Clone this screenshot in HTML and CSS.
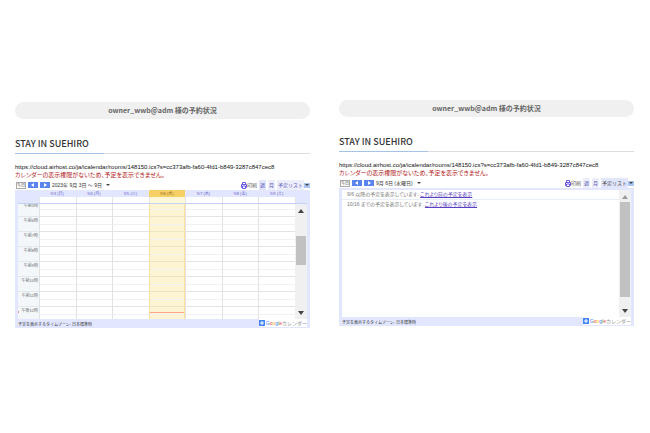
FILE: index.html
```html
<!DOCTYPE html>
<html lang="ja">
<head>
  <meta charset="UTF-8">
  <meta name="viewport" content="width=device-width, initial-scale=1.0">
  <title>予約状況</title>
  <link rel="stylesheet" href="styles.css">
</head>
<body>
  <main class="page">

    <section class="panel panel-week">
      <div class="owner">owner_wwb@adm 様の予約状況</div>
      <h1>STAY IN SUEHIRO</h1>
      <p class="url">https://cloud.airhost.co/ja/icalendar/rooms/148150.ics?s=cc373afb-fa60-4fd1-b849-3287c847cec8</p>
      <p class="error">カレンダーの表示権限がないため、予定を表示できません。</p>

      <div class="toolbar">
        <button class="today">今日</button>
        <button class="nav" aria-label="前へ"><svg viewBox="0 0 4 4"><path d="M3 0v4L0 2z"/></svg></button>
        <button class="nav" aria-label="次へ"><svg viewBox="0 0 4 4"><path d="M1 0v4l3-2z"/></svg></button>
        <button class="range">2023年 9月 3日 ～ 9日 <svg viewBox="0 0 4 2"><path d="M0 0h4L2 2z"/></svg></button>
        <a href="#" class="print"><svg viewBox="0 0 12 14"><path d="M3 5V1h6v4M3 11H1V5h10v6H9M3 8h6v5H3z"/></svg>印刷</a>
        <button class="tab active">週</button>
        <button class="tab">月</button>
        <button class="tab">予定リスト</button>
        <button class="more" aria-label="メニュー"><svg viewBox="0 0 4 2"><path d="M0 0h4L2 2z"/></svg></button>
      </div>

      <div class="calendar">
        <table class="days">
          <thead>
            <tr><th class="time"></th><th>9/3 (日)</th><th>9/4 (月)</th><th>9/5 (火)</th><th class="now">9/6 (水)</th><th>9/7 (木)</th><th>9/8 (金)</th><th>9/9 (土)</th><th class="gutter"></th></tr>
          </thead>
          <tbody>
            <tr><td class="time"></td><td></td><td></td><td></td><td class="now"></td><td></td><td></td><td></td><td class="gutter"></td></tr>
          </tbody>
        </table>
        <div class="scroller">
          <div class="hours">
            <table>
              <tbody id="hours"></tbody>
            </table>
          </div>
          <div class="scrollbar">
            <svg class="arrow" viewBox="0 0 6 4"><path d="M0 4h6L3 0z"/></svg>
            <div class="thumb"></div>
            <svg class="arrow" viewBox="0 0 6 4"><path d="M0 0h6L3 4z"/></svg>
          </div>
        </div>
        <div class="footer">
          <span>予定を表示するタイムゾーン: 日本標準時</span>
          <a href="#" class="brand"><svg viewBox="0 0 6 6"><path d="M3 1v4M1 3h4"/></svg><span class="logo"><b class="b">G</b><b class="r">o</b><b class="y">o</b><b class="b">g</b><b class="g">l</b><b class="r">e</b>カレンダー</span></a>
        </div>
      </div>
    </section>

    <section class="panel panel-list">
      <div class="owner">owner_wwb@adm 様の予約状況</div>
      <h1>STAY IN SUEHIRO</h1>
      <p class="url">https://cloud.airhost.co/ja/icalendar/rooms/148150.ics?s=cc373afb-fa60-4fd1-b849-3287c847cec8</p>
      <p class="error">カレンダーの表示権限がないため、予定を表示できません。</p>

      <div class="toolbar">
        <button class="today">今日</button>
        <button class="nav" aria-label="前へ"><svg viewBox="0 0 4 4"><path d="M3 0v4L0 2z"/></svg></button>
        <button class="nav" aria-label="次へ"><svg viewBox="0 0 4 4"><path d="M1 0v4l3-2z"/></svg></button>
        <button class="range">9月 6日 (水曜日) <svg viewBox="0 0 4 2"><path d="M0 0h4L2 2z"/></svg></button>
        <a href="#" class="print"><svg viewBox="0 0 12 14"><path d="M3 5V1h6v4M3 11H1V5h10v6H9M3 8h6v5H3z"/></svg>印刷</a>
        <button class="tab">週</button>
        <button class="tab">月</button>
        <button class="tab active">予定リスト</button>
        <button class="more" aria-label="メニュー"><svg viewBox="0 0 4 2"><path d="M0 0h4L2 2z"/></svg></button>
      </div>

      <div class="calendar">
        <div class="scroller agenda">
          <div class="events">
            <p>9/6 以降の予定を表示しています. <a href="#">これより前の予定を表示</a></p>
            <p>10/16 までの予定を表示しています. <a href="#">これより後の予定を表示</a></p>
          </div>
          <div class="scrollbar">
            <svg class="arrow off" viewBox="0 0 6 4"><path d="M0 4h6L3 0z"/></svg>
            <div class="thumb"></div>
            <svg class="arrow" viewBox="0 0 6 4"><path d="M0 0h6L3 4z"/></svg>
          </div>
        </div>
        <div class="footer">
          <span>予定を表示するタイムゾーン: 日本標準時</span>
          <a href="#" class="brand"><svg viewBox="0 0 6 6"><path d="M3 1v4M1 3h4"/></svg><span class="logo"><b class="b">G</b><b class="r">o</b><b class="y">o</b><b class="b">g</b><b class="g">l</b><b class="r">e</b>カレンダー</span></a>
        </div>
      </div>
    </section>

  </main>

  <script src="script.js"></script>
</body>
</html>
```
FILE: styles.css
```css
* {
  box-sizing: border-box;
}

body {
  margin: 0;
  background: #fff;
  color: #333;
  font-family: "Liberation Sans", "Noto Sans CJK JP", sans-serif;
  font-size: 5px;
  line-height: 8px;
}

button {
  font: inherit;
  color: inherit;
  border: none;
  padding: 0;
  background: none;
  cursor: pointer;
  white-space: nowrap;
}

svg {
  display: block;
}

.page {
  display: grid;
  grid-template-columns: 1fr 1fr;
  gap: 29px;
  align-items: start;
  padding: 100px 16px 20px 15px;
}

.panel {
  min-width: 0;
}

.panel-week {
  padding-top: 2px;
}

.owner {
  height: 17px;
  border-radius: 9px;
  background: #f0f0f0;
  color: #666;
  text-align: center;
  font-family: "Noto Sans CJK JP", sans-serif;
  font-size: 7px;
  font-weight: 700;
  line-height: 17px;
}

h1 {
  position: relative;
  margin: 17px 0 9px;
  border-bottom: 1px solid #ddd;
  font-family: "Noto Sans CJK JP", sans-serif;
  font-size: 9px;
  font-weight: 500;
  line-height: 15px;
  padding-bottom: 2px;
}

h1::after {
  content: "";
  position: absolute;
  left: 0;
  bottom: -1px;
  width: 30%;
  height: 1px;
  background: #a4c3e6;
}

.url,
.error {
  margin: 0;
  font-size: 6px;
  white-space: nowrap;
}

.url {
  color: #111;
}

.error {
  color: #b32121;
  font-feature-settings: "palt";
}

.toolbar {
  display: flex;
  align-items: center;
  gap: 2px;
  height: 10px;
  margin-top: 1px;
  padding-left: 1px;
}

.today {
  display: flex;
  align-items: center;
  justify-content: center;
  width: 10px;
  height: 7px;
  border: 1px solid #aaa;
  font-size: 4px;
  line-height: 5px;
}

.nav {
  display: flex;
  align-items: center;
  justify-content: center;
  width: 10px;
  height: 6px;
  background: #5b84ee;
}

.nav svg {
  width: 4px;
  height: 4px;
  fill: #fff;
}

.range {
  display: flex;
  align-items: center;
  gap: 4px;
  font-feature-settings: "palt";
}

.range svg,
.more svg {
  width: 4px;
  height: 2px;
  fill: #444;
}

.print {
  display: flex;
  align-items: center;
  margin-left: auto;
  color: #666;
  text-decoration: none;
}

.print svg {
  width: 6px;
  height: 7px;
  fill: none;
  stroke: #6a5ae0;
  stroke-width: 2;
}

.tab {
  height: 10px;
  padding: 0 1px;
  background: #eceffb;
  color: #5a54b8;
}

.tab.active {
  background: #e1e6fc;
}

.panel-list .tab.active {
  color: #444;
}

.more {
  display: flex;
  align-items: center;
  justify-content: center;
  width: 6px;
  height: 5px;
  margin-left: -2px;
  background: #a9c5f3;
}

.calendar {
  background: #e2e7ff;
  padding: 0 3px;
}

.calendar table {
  width: 100%;
  table-layout: fixed;
  border-spacing: 0;
}

.calendar th,
.calendar td {
  padding: 0;
}

.calendar .time {
  width: 21px;
}

.calendar .gutter {
  width: 12px;
  background: none;
}

.days {
  font-size: 4px;
}

.days th {
  height: 7px;
  color: #6a62c4;
  font-weight: normal;
  line-height: 7px;
}

.days td {
  height: 6px;
  background: #fff;
  border-left: 1px solid #e3e3e8;
}

.days td.time {
  background: none;
  border: none;
}

.days th.now {
  background: #f6d065;
  color: #8a6420;
}

.days td.now {
  background: #fff7d7;
}

.scroller {
  display: flex;
  height: 116px;
  border-top: 1px solid #c3d2f7;
  background: #fff;
}

.hours {
  flex: 1;
  overflow: hidden;
}

.hours table {
  margin-top: -3px;
}

.hours td {
  height: 15px;
  border-top: 1px solid #e4e4e4;
  border-left: 1px solid #e2e2e2;
  background: linear-gradient(transparent 7px, #f1f1f1 7px, #f1f1f1 8px, transparent 8px);
}

.hours th {
  padding-right: 1px;
  border-top: 1px solid #e3e8ee;
  background: #f3f7fa;
  color: #666;
  font-size: 4px;
  font-weight: normal;
  line-height: 7px;
  text-align: right;
  vertical-align: top;
}

.hours td.now {
  position: relative;
  border-left: 1px solid #f8e29c;
  border-right: 1px solid #f8e29c;
  background-color: #fdf4d3;
  border-top-color: #ece4c4;
}

/* current time line */
.line {
  position: absolute;
  left: 0;
  right: 0;
  top: 5px;
  height: 1px;
  background: #fba58c;
}

.hours th.current {
  position: relative;
}

.hours th.current::before {
  content: "";
  position: absolute;
  left: 0;
  top: 4px;
  border: 1px solid transparent;
  border-left-color: #e33;
}

.scrollbar {
  display: flex;
  flex-direction: column;
  align-items: center;
  width: 12px;
  padding: 5px 1px 4px;
  background: #f0f0f0;
}

.arrow {
  width: 6px;
  height: 4px;
  fill: #444;
}

.arrow.off {
  fill: #999;
}

.thumb {
  width: 100%;
  height: 29px;
  margin: 23px 0 auto;
  background: #c1c1c1;
}

.agenda {
  height: 129px;
  border-top: 2px solid #e2e7ff;
}

.agenda .thumb {
  height: 95px;
  margin-top: 3px;
}

.events {
  flex: 1;
  min-width: 0;
  font-feature-settings: "palt";
}

.events p {
  margin: 0;
  padding-left: 5px;
  color: #777;
  line-height: 9px;
  white-space: nowrap;
}

.events p:first-child {
  border-bottom: 1px solid #e8edfc;
}

.events a {
  color: #5a3fc0;
}

.footer {
  display: flex;
  justify-content: space-between;
  height: 9px;
  color: #333;
  font-size: 4px;
  line-height: 11px;
}

.brand {
  display: flex;
  align-items: center;
  gap: 1px;
  height: 8px;
  background: #fff;
  color: #999;
  font-size: 5px;
  line-height: 8px;
  text-decoration: none;
}

.brand svg {
  width: 6px;
  height: 6px;
  background: #4285f4;
  fill: none;
  stroke: #fff;
}

.brand b {
  font-weight: normal;
}

.b {
  color: #4285f4;
}

.r {
  color: #ea4335;
}

.y {
  color: #fbbc05;
}

.g {
  color: #34a853;
}
```
FILE: script.js
```js
const hours = ['午前5時', '午前6時', '午前7時', '午前8時', '午前9時', '午前10時', '午前11時', '午後12時'];
const tbody = document.getElementById('hours');

hours.forEach(hour => {
  const current = hour === '午後12時';
  const row = document.createElement('tr');
  row.innerHTML = `<th class="time${current ? ' current' : ''}">${hour}</th>`;
  for (let day = 0; day < 7; day++) {
    const cell = document.createElement('td');
    if (day === 3) {
      cell.className = 'now';
      if (current) cell.innerHTML = '<div class="line"></div>';
    }
    row.appendChild(cell);
  }
  tbody.appendChild(row);
});
```
